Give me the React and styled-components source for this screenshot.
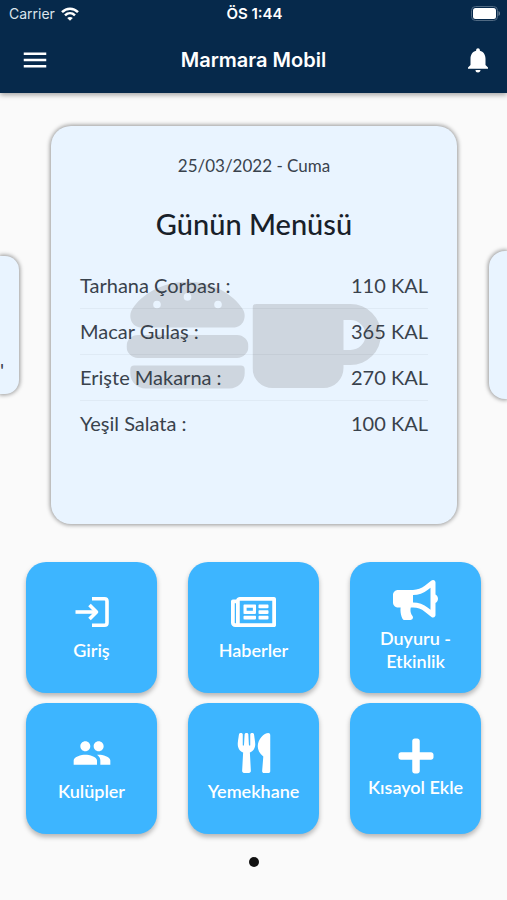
// src/App.jsx
import React, { useState } from 'react';
import styled, { createGlobalStyle, ThemeProvider } from 'styled-components';
import { MdMenu, MdNotifications, MdPeople } from 'react-icons/md';
import { FaRegNewspaper, FaBullhorn, FaUtensils, FaPlus, FaHamburger } from 'react-icons/fa';

const theme = {
  colors: {
    navy: '#06294b',
    page: '#fafafa',
    card: '#e9f4ff',
    tile: '#3db5ff',
    watermark: '#ced6df',
    text: { primary: '#182029', secondary: '#39424c' }
  },
  fonts: {
    ui: "'Inter', 'Liberation Sans', sans-serif",
    body: "'Lato', 'Open Sans', sans-serif"
  }
};

const GlobalStyle = createGlobalStyle`
  * { box-sizing: border-box; }
  body {
    margin: 0;
    background: ${theme.colors.page};
    font-family: ${theme.fonts.body};
  }
`;

const Header = styled.header`
  position: relative;
  background: ${({theme}) => theme.colors.navy};
  color: white;
  font-family: ${({theme}) => theme.fonts.ui};
  box-shadow: 0 2px 5px rgba(0,0,0,0.35);
`;

const StatusBar = styled.div`
  display: grid;
  grid-template-columns: 1fr auto 1fr;
  align-items: center;
  height: 27px;
  padding: 0 7px 0 9px;
  font-size: 14px;
`;

const Carrier = styled.span`
  display: flex;
  align-items: center;
  gap: 6px;
  color: #dbe4ec;
`;

const Clock = styled.time`
  font-size: 15px;
  font-weight: 600;
`;

const BatteryIcon = styled.svg`
  justify-self: end;
`;

const AppBar = styled.div`
  display: grid;
  grid-template-columns: 1fr auto 1fr;
  align-items: center;
  height: 66px;
  padding: 0 14px;
`;

const Title = styled.h1`
  margin: 0;
  font-size: 20px;
  font-weight: 600;
`;

const IconButton = styled.button`
  display: flex;
  justify-self: ${({$end}) => ($end ? 'end' : 'start')};
  padding: ${({$end}) => ($end ? '0' : '0 6px')};
  border: none;
  background: transparent;
  color: white;
  font-size: 30px;
  cursor: pointer;
`;

const Carousel = styled.section`
  display: flex;
  align-items: center;
  gap: 32px;
  padding-top: 33px;
`;

const Panel = styled.article`
  background: ${({theme}) => theme.colors.card};
  box-shadow: 0 0 4px 1px rgba(0,0,0,0.4);
`;

const SidePanel = styled(Panel)`
  display: flex;
  align-items: flex-end;
  flex: 0 0 ${({$side}) => ($side === 'left' ? 19 : 18)}px;
  height: ${({$side}) => ($side === 'left' ? 138 : 148)}px;
  padding-bottom: 12px;
  border-radius: ${({$side}) => ($side === 'left' ? '0 14px 14px 0' : '16px 0 0 16px')};
  color: ${({theme}) => theme.colors.text.secondary};
  font-size: 20px;
`;

const MenuCard = styled(Panel)`
  position: relative;
  flex: 1;
  min-width: 0;
  min-height: 398px;
  padding: 28px 29px;
  border-radius: 20px;
  text-align: center;
`;

const MenuDate = styled.p`
  margin: 0;
  font-size: 17px;
  line-height: 24px;
  color: ${({theme}) => theme.colors.text.secondary};
`;

const MenuTitle = styled.h2`
  margin: 28px 0 20px;
  font-size: 29px;
  line-height: 36px;
  font-weight: 500;
  color: ${({theme}) => theme.colors.text.primary};
`;

// burger + mug lie behind the meal list
const Watermark = styled.div`
  position: absolute;
  top: 148px;
  left: 50%;
  display: flex;
  align-items: flex-end;
  gap: 4px;
  transform: translateX(-50%);
  color: ${({theme}) => theme.colors.watermark};
  font-size: 122px;
`;

const MugIcon = styled.svg`
  margin-bottom: 8px;
`;

const MealTable = styled.table`
  position: relative;
  width: 100%;
  border-collapse: collapse;
  font-size: 20px;
  line-height: 24px;
  color: ${({theme}) => theme.colors.text.secondary};

  tr + tr { border-top: 1px solid rgba(0,0,0,0.04); }
  th, td { height: 46px; padding: 0; font-weight: 400; }
  th { text-align: left; }
  td { text-align: right; }
`;

const Tiles = styled.nav`
  display: grid;
  grid-template-columns: repeat(3, 1fr);
  gap: 10px 31px;
  padding: 38px 26px 0;
`;

const Tile = styled.button`
  display: flex;
  flex-direction: column;
  align-items: center;
  justify-content: center;
  gap: ${({$tight}) => ($tight ? 0 : 7)}px;
  aspect-ratio: 1;
  padding: 0 12px 2px;
  border: none;
  border-radius: 20px;
  background: ${({theme}) => theme.colors.tile};
  box-shadow: 0 3px 5px rgba(0,0,0,0.28);
  color: white;
  font-family: inherit;
  cursor: pointer;

  svg {
    flex: none;
    width: ${({$wide}) => ($wide ? 45 : 40)}px;
    height: 40px;
  }
`;

const TileLabel = styled.span`
  font-size: 18px;
  line-height: 23px;
  font-weight: 600;
`;

const Pager = styled.div`
  display: flex;
  justify-content: center;
  padding: 23px 0 32px;
`;

const PagerDot = styled.button`
  width: 10px;
  height: 10px;
  padding: 0;
  border: none;
  border-radius: 50%;
  background: #111;
`;

const WifiIcon = () => (
  <svg width="18" height="14" viewBox="0 0 18 14" fill="none" stroke="white" strokeWidth="2.5">
    <path d="M1 5.2C5.6 .6 12.4 .6 17 5.2" />
    <path d="M4 8.4c2.9-2.8 7.1-2.8 10 0" />
    <path d="M9 13.8 6.2 11c1.6-1.5 4-1.5 5.6 0Z" fill="white" stroke="none" />
  </svg>
);

const Battery = () => (
  <BatteryIcon width="29" height="15" viewBox="0 0 29 15">
    <rect x="0.5" y="0.5" width="26" height="14" rx="4" fill="none" stroke="#506a83" />
    <rect x="2" y="2" width="23" height="11" rx="2.5" fill="white" />
    <path d="M27.500 5c2 .8 2 4.200 0 5Z" fill="#6b8095" />
  </BatteryIcon>
);

const LoginIcon = () => (
  <svg viewBox="0 0 34 40" fill="none" stroke="white" strokeWidth="3.6">
    <path d="M17 6.800h12.500q2.500 0 2.500 2.500v21.400q0 2.500-2.500 2.500H17" />
    <path d="M.5 20H21" />
    <path d="m14.500 13 7 7-7 7" strokeLinejoin="round" />
  </svg>
);

const Mug = () => (
  <MugIcon width="129" height="84" viewBox="0 0 129 84" fill="currentColor">
    <path
      fillRule="evenodd"
      d="M4 0h94a30.500 30.500 0 0 1 0 61h-7v3a20 20 0 0 1-20 20H20A20 20 0 0 1 0 64V4a4 4 0 0 1 4-4ZM91 16v30h7a15 15 0 0 0 0-30Z"
    />
  </MugIcon>
);

const meals = [
  { name: 'Tarhana Çorbası', kcal: 110 },
  { name: 'Macar Gulaş', kcal: 365 },
  { name: 'Erişte Makarna', kcal: 270 },
  { name: 'Yeşil Salata', kcal: 100 }
];

const shortcuts = [
  { label: 'Giriş', Icon: LoginIcon },
  { label: 'Haberler', Icon: FaRegNewspaper, wide: true },
  { label: 'Duyuru - Etkinlik', Icon: FaBullhorn, wide: true },
  { label: 'Kulüpler', Icon: MdPeople },
  { label: 'Yemekhane', Icon: FaUtensils },
  { label: 'Kısayol Ekle', Icon: FaPlus, tight: true }
];

export default function App() {
  const [page, setPage] = useState(0);

  return (
    <ThemeProvider theme={theme}>
      <GlobalStyle />

      <Header>
        <StatusBar>
          <Carrier>Carrier <WifiIcon /></Carrier>
          <Clock>ÖS 1:44</Clock>
          <Battery />
        </StatusBar>
        <AppBar>
          <IconButton aria-label="Menü"><MdMenu /></IconButton>
          <Title>Marmara Mobil</Title>
          <IconButton $end aria-label="Bildirimler"><MdNotifications /></IconButton>
        </AppBar>
      </Header>

      <main>
        <Carousel>
          <SidePanel $side="left">'</SidePanel>

          <MenuCard>
            <Watermark><FaHamburger /><Mug /></Watermark>
            <MenuDate>25/03/2022 - Cuma</MenuDate>
            <MenuTitle>Günün Menüsü</MenuTitle>
            <MealTable>
              <tbody>
                {meals.map(m => (
                  <tr key={m.name}>
                    <th scope="row">{m.name} :</th>
                    <td>{m.kcal} KAL</td>
                  </tr>
                ))}
              </tbody>
            </MealTable>
          </MenuCard>

          <SidePanel $side="right" />
        </Carousel>

        <Tiles>
          {shortcuts.map(({ label, Icon, tight, wide }) => (
            <Tile key={label} $tight={tight} $wide={wide}>
              <Icon />
              <TileLabel>{label}</TileLabel>
            </Tile>
          ))}
        </Tiles>

        <Pager>
          <PagerDot aria-label="Sayfa 1" aria-current={page === 0} onClick={() => setPage(0)} />
        </Pager>
      </main>
    </ThemeProvider>
  );
}
